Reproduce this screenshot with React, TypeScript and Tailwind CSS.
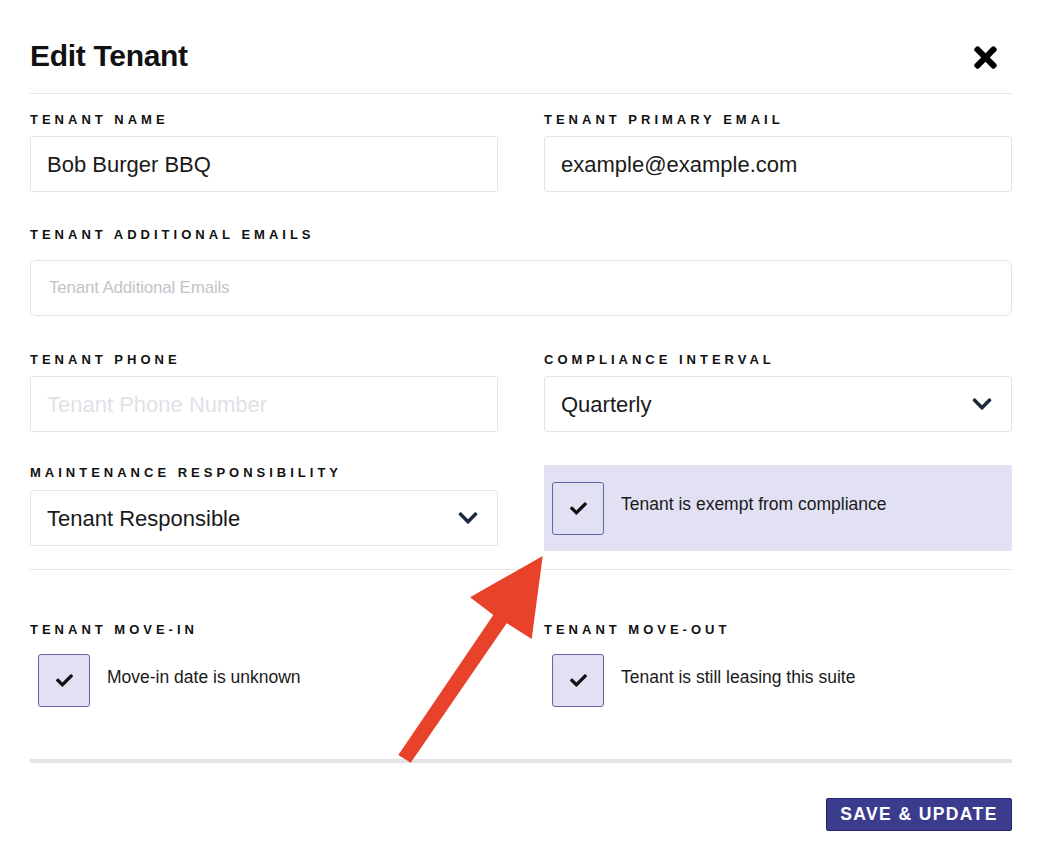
import React from "react";
import { FaCheck, FaTimes, FaChevronDown } from "react-icons/fa";

const font = { fontFamily: '"Liberation Sans", Arial, sans-serif' };

function Label({ children }: { children: React.ReactNode }) {
  return (
    <div className="text-[13px] leading-[16px] font-bold tracking-[4px] text-[#111] uppercase whitespace-nowrap">
      {children}
    </div>
  );
}

function TextBox({ value, placeholder }: { value?: string; placeholder?: string }) {
  return (
    <div className="h-[56px] border border-[#e4e4e9] rounded-[3px] bg-white flex items-center px-[16px] text-[22px]">
      {value ? (
        <span className="text-[#1a1a1a]">{value}</span>
      ) : (
        <span className="text-[#e1e1e7]">{placeholder}</span>
      )}
    </div>
  );
}

function SelectBox({ value }: { value: string }) {
  return (
    <div className="h-[56px] border border-[#e4e4e9] rounded-[3px] bg-white flex items-center justify-between pl-[16px] pr-[18px] text-[22px]">
      <span className="text-[#1a1a1a]">{value}</span>
      <FaChevronDown size={22} color="#1b2b3b" />
    </div>
  );
}

function CheckBox() {
  return (
    <div className="w-[52px] h-[53px] shrink-0 rounded-[3px] border border-[#6464a9] bg-[#e1e1f3] flex items-center justify-center">
      <FaCheck size={17} color="#111" />
    </div>
  );
}

export default function App() {
  return (
    <div className="relative w-[1038px] min-h-[854px] bg-white" style={font}>
      <div className="pl-[30px] pr-[26px] pt-[38px]">
        <div className="flex items-center justify-between pb-[19px] border-b border-[#e6e6ea]">
          <h1 className="text-[30px] leading-[36px] font-bold text-[#111] tracking-[-0.3px]">Edit Tenant</h1>
          <div className="mr-[10px] mt-[2px]">
            <FaTimes size={33} color="#000" />
          </div>
        </div>

        <div className="grid grid-cols-2 gap-x-[46px] pt-[18px]">
          <div className="flex flex-col gap-[8px]">
            <Label>Tenant Name</Label>
            <TextBox value="Bob Burger BBQ" />
          </div>
          <div className="flex flex-col gap-[8px]">
            <Label>Tenant Primary Email</Label>
            <TextBox value="example@example.com" />
          </div>
        </div>

        <div className="flex flex-col gap-[17px] pt-[35px]">
          <Label>Tenant Additional Emails</Label>
          <div className="h-[56px] border border-[#e4e4e9] rounded-[6px] bg-white flex items-center px-[18px] text-[17px] text-[#c3c3c9] tracking-[-0.2px]">
            Tenant Additional Emails
          </div>
        </div>

        <div className="grid grid-cols-2 gap-x-[46px] pt-[36px]">
          <div className="flex flex-col gap-[8px]">
            <Label>Tenant Phone</Label>
            <TextBox placeholder="Tenant Phone Number" />
          </div>
          <div className="flex flex-col gap-[8px]">
            <Label>Compliance Interval</Label>
            <SelectBox value="Quarterly" />
          </div>
        </div>

        <div className="grid grid-cols-2 gap-x-[46px] pt-[33px] items-start">
          <div className="flex flex-col gap-[9px]">
            <Label>Maintenance Responsibility</Label>
            <SelectBox value="Tenant Responsible" />
          </div>
          <div className="h-[86px] rounded-[2px] bg-[#e1e1f3] flex items-center pl-[8px] gap-[17px]">
            <CheckBox />
            <span className="text-[17.5px] text-[#1a1a1a] pb-[8px]">Tenant is exempt from compliance</span>
          </div>
        </div>

        <div className="mt-[18px] border-t border-[#e6e6ea]" />

        <div className="grid grid-cols-2 gap-x-[46px] pt-[52px]">
          <div className="flex flex-col gap-[16px]">
            <Label>Tenant Move-In</Label>
            <div className="flex items-center pl-[8px] gap-[17px]">
              <CheckBox />
              <span className="text-[17.5px] text-[#1a1a1a] pb-[7px]">Move-in date is unknown</span>
            </div>
          </div>
          <div className="flex flex-col gap-[16px]">
            <Label>Tenant Move-Out</Label>
            <div className="flex items-center pl-[8px] gap-[17px]">
              <CheckBox />
              <span className="text-[17.5px] text-[#1a1a1a] pb-[7px]">Tenant is still leasing this suite</span>
            </div>
          </div>
        </div>

        <div className="mt-[52px] h-[4px] bg-[#e3e3e8]" />

        <div className="flex justify-end pt-[35px]">
          <button className="w-[186px] h-[33px] rounded-[2px] bg-[#3c3c8f] border border-[#25256a] text-white font-bold text-[17.5px] tracking-[1.4px] flex items-center justify-center">
            SAVE &amp; UPDATE
          </button>
        </div>
      </div>

      <svg
        className="absolute left-0 top-0 pointer-events-none"
        width="1038"
        height="854"
        viewBox="0 0 1038 854"
      >
        <polygon
          points="398.3,755 410.7,762.7 506.7,623.3 531.7,639 542.7,556 470,597.3 493.3,615"
          fill="#e8432a"
        />
      </svg>
    </div>
  );
}
